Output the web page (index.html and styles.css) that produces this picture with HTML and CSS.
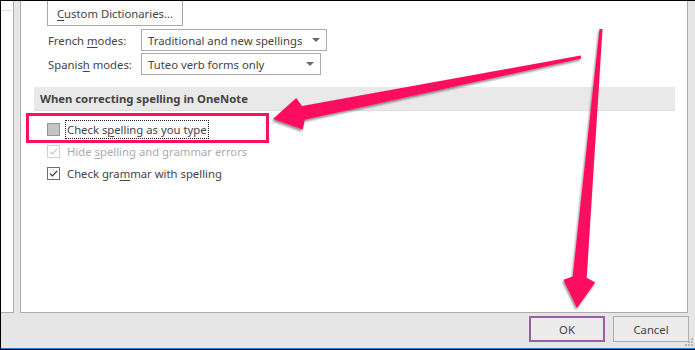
FILE: index.html
```html
<!DOCTYPE html>
<html>
<head>
<meta charset="utf-8">
<title>Proofing</title>
<link rel="stylesheet" href="styles.css">
</head>
<body>
<div class="window">
  <div class="main">
    <div class="nav"><div class="nav-line"></div></div>
    <div class="panel">
      <button class="btn dict"><span><u>C</u>ustom Dictionaries...</span></button>
      <div class="field first">
        <span class="lbl">French <u>m</u>odes:</span>
        <div class="select w186"><span>Traditional and new spellings</span><span class="caret"></span></div>
      </div>
      <div class="field second">
        <span class="lbl">Spanis<u>h</u> modes:</span>
        <div class="select w180"><span>Tuteo verb forms only</span><span class="caret"></span></div>
      </div>
      <div class="section">When correcting spelling in OneNote</div>
      <div class="checks">
        <div class="check">
          <span class="box box-mixed"></span>
          <span class="text focus">Check s<u>p</u>elling as you type</span>
        </div>
        <div class="check disabled">
          <svg class="box-svg" width="13" height="13" viewBox="0 0 13 13"><rect x="0.5" y="0.5" width="12" height="12" fill="#fff" stroke="#cfcfcf"/><path d="M3 6.6 L5.4 9 L10.2 3.8" fill="none" stroke="#c6c6c6" stroke-width="1.2"/></svg>
          <span class="text">Hide <u>s</u>pelling and grammar errors</span>
        </div>
        <div class="check">
          <svg class="box-svg" width="13" height="13" viewBox="0 0 13 13"><rect x="0.5" y="0.5" width="12" height="12" fill="#fff" stroke="#6e6e6e"/><path d="M3 6.6 L5.4 9 L10.2 3.8" fill="none" stroke="#333" stroke-width="1.2"/></svg>
          <span class="text">Check gra<u>m</u>mar with spelling</span>
        </div>
      </div>
    </div>
  </div>
  <div class="footer">
    <button class="btn ok">OK</button>
    <button class="btn cancel">Cancel</button>
    <svg class="grip" width="11" height="11" viewBox="0 0 11 11">
      <rect x="8" y="1" width="2" height="2"/>
      <rect x="5" y="4" width="2" height="2"/><rect x="8" y="4" width="2" height="2"/>
      <rect x="2" y="7" width="2" height="2"/><rect x="5" y="7" width="2" height="2"/><rect x="8" y="7" width="2" height="2"/>
    </svg>
  </div>
</div>
<div class="highlight"></div>
<svg class="arrows" width="695" height="350" viewBox="0 0 695 350">
  <defs>
    <filter id="sh" x="-20%" y="-20%" width="140%" height="140%">
      <feDropShadow dx="-1" dy="2" stdDeviation="1.2" flood-color="#000" flood-opacity="0.45"/>
    </filter>
  </defs>
  <g fill="#fd0f5e" filter="url(#sh)">
    <polygon points="273,119 296.3,98 302,106 580.7,55.5 581.3,58.5 304.8,119.8 302.7,129.4"/>
    <polygon points="577,308 563.4,279.7 572.7,276.5 599.5,28.9 602.5,29.1 586.7,277.7 595.2,282.5"/>
  </g>
</svg>
</body>
</html>
```

FILE: styles.css
```css
* { box-sizing: border-box; margin: 0; padding: 0; }
html, body { width: 695px; height: 350px; overflow: hidden; background: #e6e6e6; }
body {
  font-family: "Noto Sans", "Open Sans", sans-serif;
  font-size: 11.3px;
  color: #444;
  position: relative;
}
u { text-decoration-thickness: 1px; text-underline-offset: 2px; }

.window {
  width: 695px; height: 350px;
  border-top: 1px solid #000;
  border-left: 1px solid #000;
  border-bottom: 1px solid #000;
  display: flex; flex-direction: column;
  background: #e6e6e6;
}
.main { display: flex; height: 312px; flex: none; }
.nav {
  width: 13px; height: 312px;
  background: #fff;
  border-right: 1px solid #ababab;
  border-bottom: 1px solid #ababab;
  padding-top: 9px;
}
.nav-line { width: 10px; height: 1px; background: #dcdcdc; }

.panel {
  width: 668px; height: 312px;
  margin-left: 6px;
  background: #fff;
  border: 1px solid #ababab;
  border-top: none;
  display: flex; flex-direction: column; align-items: flex-start;
  overflow: hidden;
}

.btn {
  font: inherit; color: #444;
  background: #ececec;
  border: 1px solid #adadad;
  display: flex; align-items: center; justify-content: center;
}
.dict {
  margin: -1px 0 0 26px;
  width: 136px; height: 26px;
  background: #fdfdfd;
  border-color: #a9a9a9;
}

.field { display: flex; align-items: center; margin-left: 27px; height: 22px; }
.field.first { margin-top: 3px; }
.field.second { margin-top: 2px; }
.lbl { width: 93px; }
.select {
  height: 22px;
  border: 1px solid #ababab;
  background: #fff;
  display: flex; align-items: center;
  padding: 0 6px;
}
.w186 { width: 186px; }
.w180 { width: 180px; }
.caret {
  margin-left: auto;
  width: 0; height: 0;
  border-left: 4px solid transparent;
  border-right: 4px solid transparent;
  border-top: 4px solid #6a6a6a;
}

.section {
  margin: 12px 0 0 13px;
  width: 641px; height: 24px;
  background: #e9e9e9;
  border-bottom: 1px solid #dedede;
  padding-left: 6px;
  display: flex; align-items: center;
  font-weight: bold;
  color: #444;
}

.checks { margin-top: 7px; display: flex; flex-direction: column; }
.check { height: 22px; display: flex; align-items: center; padding-left: 26px; }
.box, .box-svg { width: 13px; height: 13px; flex: none; display: block; }
.box-mixed { background: #c4c4c4; border: 1px solid #959595; }
.text {
  margin-left: 5px;
  height: 19px;
  display: block;
  line-height: 17px;
  white-space: nowrap;
  padding: 0 1px;
  border: 1px solid transparent;
}
.text.focus { border: 1px dotted #222; }
.disabled .text { color: #ababab; }

.footer {
  height: 36px; flex: none;
  border-bottom: 1px solid #2f7fc6;
  display: flex; justify-content: flex-end; align-items: flex-start;
  gap: 8px;
  padding: 3px 6px 0 0;
  position: relative;
}
.ok, .cancel { width: 76px; height: 26px; }
.ok { border: 2px solid #a05aa6; }
.grip { position: absolute; right: 1px; bottom: 0; fill: #b5b5b5; }

.highlight {
  position: absolute; left: 26px; top: 113px;
  width: 243px; height: 30px;
  border: 3px solid #fd0f5e;
}
.arrows { position: absolute; left: 0; top: 0; pointer-events: none; }
```
